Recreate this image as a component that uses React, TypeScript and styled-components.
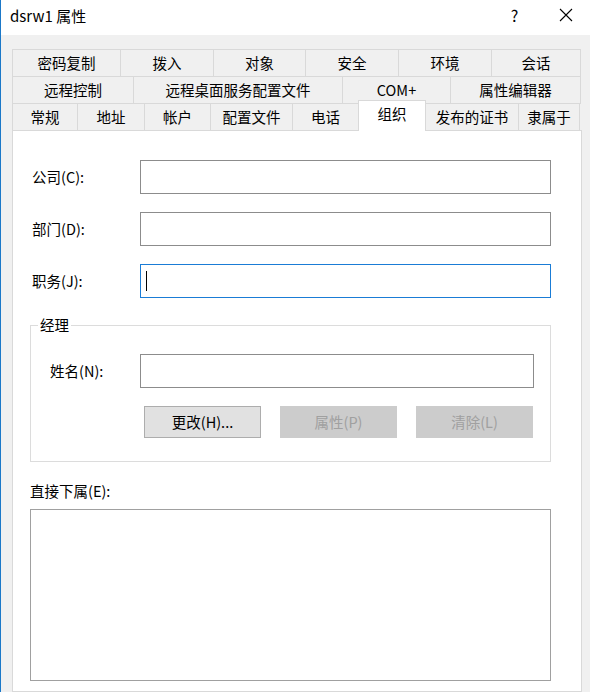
import styled, { createGlobalStyle } from "styled-components";

const GlobalStyle = createGlobalStyle`
  html, body {
    margin: 0;
    padding: 0;
    background: #f0f0f0;
  }
  * {
    box-sizing: border-box;
  }
`;

const Window = styled.div`
  width: 590px;
  height: 692px;
  overflow: hidden;
  background: #f0f0f0;
  border-left: 1px solid #1b78c8;
  font-family: "Noto Sans CJK SC", "Liberation Sans", sans-serif;
  font-size: 14.5px;
  color: #000;
  display: flex;
  flex-direction: column;
`;

const TitleBar = styled.div`
  height: 35px;
  flex: none;
  background: #fff;
  display: flex;
  align-items: center;
  padding: 0 0 0 9px;
`;

const Title = styled.div`
  flex: 1;
  font-size: 15px;
  line-height: 20px;
  margin-top: -4px;
`;

const TitleButton = styled.div<{ $w: number }>`
  width: ${(p) => p.$w}px;
  height: 35px;
  display: flex;
  align-items: center;
  justify-content: center;
  font-size: 16px;
  margin-top: -6px;
`;

const Body = styled.div`
  flex: 1;
  padding: 14px 9px 0 11px;
  display: flex;
  flex-direction: column;
`;

const TabRow = styled.div`
  display: flex;
  height: 28px;
  margin-top: -1px;
  &:first-child {
    margin-top: 0;
  }
`;

const Tab = styled.div<{ $active?: boolean }>`
  flex: none;
  margin-left: -1px;
  &:first-child {
    margin-left: 0;
  }
  height: ${(p) => (p.$active ? "31px" : "28px")};
  margin-top: ${(p) => (p.$active ? "-3px" : "0")};
  background: ${(p) => (p.$active ? "#fff" : "#f0f0f0")};
  border: 1px solid #d9d9d9;
  border-bottom: ${(p) => (p.$active ? "none" : "1px solid #d9d9d9")};
  position: ${(p) => (p.$active ? "relative" : "static")};
  z-index: ${(p) => (p.$active ? 2 : 0)};
  display: flex;
  align-items: ${(p) => (p.$active ? "flex-start" : "center")};
  padding-top: ${(p) => (p.$active ? "3px" : "0")};
  justify-content: center;
  line-height: 20px;
  white-space: nowrap;
`;

const Panel = styled.div`
  flex: 1;
  margin-top: -1px;
  width: 570px;
  background: #fff;
  border: 1px solid #d9d9d9;
  padding: 29px 29px 0 19px;
  display: flex;
  flex-direction: column;
`;

const FieldRow = styled.div`
  display: grid;
  grid-template-columns: 108px 411px;
  align-items: center;
  margin-bottom: 18px;
`;

const Label = styled.div`
  line-height: 20px;
`;

const TextBox = styled.div<{ $focused?: boolean }>`
  height: 34px;
  background: #fff;
  border: 1px solid ${(p) => (p.$focused ? "#1a7cd6" : "#8c8c8c")};
  display: flex;
  align-items: center;
  padding-left: 5px;
`;

const Caret = styled.div`
  width: 1px;
  height: 20px;
  background: #000;
`;

const Group = styled.fieldset`
  margin: -1px 0 0 -2px;
  width: 521px;
  border: 1px solid #dcdcdc;
  padding: 19px 16px 23px 19px;
  min-width: 0;
`;

const Legend = styled.legend`
  padding: 0 2px;
  margin-left: -12px;
  line-height: 20px;
`;

const GroupRow = styled.div`
  display: grid;
  grid-template-columns: 90px 394px;
  align-items: center;
`;

const ButtonRow = styled.div`
  display: flex;
  justify-content: space-between;
  margin: 18px 0 0 94px;
  width: 389px;
`;

const Button = styled.div<{ $disabled?: boolean }>`
  width: 117px;
  height: 32px;
  display: flex;
  align-items: center;
  justify-content: center;
  background: ${(p) => (p.$disabled ? "#cccccc" : "#e1e1e1")};
  border: 1px solid ${(p) => (p.$disabled ? "#cccccc" : "#adadad")};
  color: ${(p) => (p.$disabled ? "#a0a0a0" : "#000")};
  line-height: 20px;
`;

const ListLabel = styled.div`
  margin: 19px 0 0 -2px;
  line-height: 20px;
`;

const ListBox = styled.div`
  margin: 8px 0 0 -2px;
  width: 521px;
  height: 172px;
  background: #fff;
  border: 1px solid #a0a0a0;
`;

const tabRows: { label: string; width: number; active?: boolean }[][] = [
  [
    { label: "密码复制", width: 109 },
    { label: "拨入", width: 94 },
    { label: "对象", width: 93 },
    { label: "安全", width: 94 },
    { label: "环境", width: 94 },
    { label: "会话", width: 90 },
  ],
  [
    { label: "远程控制", width: 122 },
    { label: "远程桌面服务配置文件", width: 210 },
    { label: "COM+", width: 109 },
    { label: "属性编辑器", width: 131 },
  ],
  [
    { label: "常规", width: 66 },
    { label: "地址", width: 68 },
    { label: "帐户", width: 67 },
    { label: "配置文件", width: 83 },
    { label: "电话", width: 67 },
    { label: "组织", width: 68, active: true },
    { label: "发布的证书", width: 94 },
    { label: "隶属于", width: 62 },
  ],
];

function App() {
  return (
    <Window>
      <GlobalStyle />
      <TitleBar>
        <Title>dsrw1 属性</Title>
        <TitleButton $w={55}>?</TitleButton>
        <TitleButton $w={48}>
          <svg width="14" height="14" viewBox="0 0 14 14">
            <path d="M1 1 L13 13 M13 1 L1 13" stroke="#000" strokeWidth="1.1" />
          </svg>
        </TitleButton>
      </TitleBar>
      <Body>
        {tabRows.map((row, i) => (
          <TabRow key={i}>
            {row.map((tab) => (
              <Tab key={tab.label} $active={tab.active} style={{ width: tab.width }}>
                {tab.label}
              </Tab>
            ))}
          </TabRow>
        ))}
        <Panel>
          <FieldRow>
            <Label>公司(C):</Label>
            <TextBox />
          </FieldRow>
          <FieldRow>
            <Label>部门(D):</Label>
            <TextBox />
          </FieldRow>
          <FieldRow>
            <Label>职务(J):</Label>
            <TextBox $focused>
              <Caret />
            </TextBox>
          </FieldRow>
          <Group>
            <Legend>经理</Legend>
            <GroupRow>
              <Label>姓名(N):</Label>
              <TextBox />
            </GroupRow>
            <ButtonRow>
              <Button>更改(H)...</Button>
              <Button $disabled>属性(P)</Button>
              <Button $disabled>清除(L)</Button>
            </ButtonRow>
          </Group>
          <ListLabel>直接下属(E):</ListLabel>
          <ListBox />
        </Panel>
      </Body>
    </Window>
  );
}

export default App;
